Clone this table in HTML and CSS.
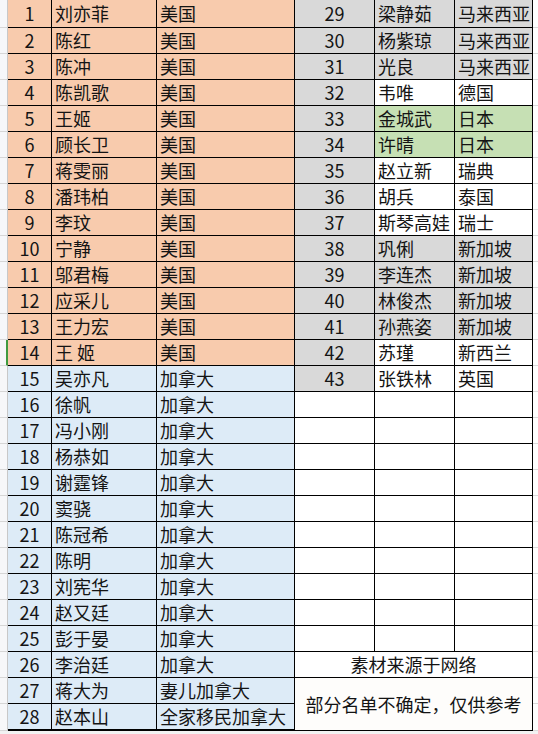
FILE: index.html
```html
<!DOCTYPE html>
<html lang="zh">
<head>
<meta charset="utf-8">
<link rel="stylesheet" href="styles.css">
</head>
<body>
<div class="sheet">
<div class="s"></div><div class="c n o">1</div><div class="c t o">刘亦菲</div><div class="c t o">美国</div><div class="c n g">29</div><div class="c t g">梁静茹</div><div class="c t g">马来西亚</div><div class="e"></div>
<div class="s"></div><div class="c n o">2</div><div class="c t o">陈红</div><div class="c t o">美国</div><div class="c n g">30</div><div class="c t g">杨紫琼</div><div class="c t g">马来西亚</div><div class="e"></div>
<div class="s"></div><div class="c n o">3</div><div class="c t o">陈冲</div><div class="c t o">美国</div><div class="c n g">31</div><div class="c t g">光良</div><div class="c t g">马来西亚</div><div class="e"></div>
<div class="s"></div><div class="c n o">4</div><div class="c t o">陈凯歌</div><div class="c t o">美国</div><div class="c n g">32</div><div class="c t w">韦唯</div><div class="c t w">德国</div><div class="e"></div>
<div class="s"></div><div class="c n o">5</div><div class="c t o">王姬</div><div class="c t o">美国</div><div class="c n g">33</div><div class="c t gr">金城武</div><div class="c t gr">日本</div><div class="e"></div>
<div class="s"></div><div class="c n o">6</div><div class="c t o">顾长卫</div><div class="c t o">美国</div><div class="c n g">34</div><div class="c t gr">许晴</div><div class="c t gr">日本</div><div class="e"></div>
<div class="s"></div><div class="c n o">7</div><div class="c t o">蒋雯丽</div><div class="c t o">美国</div><div class="c n g">35</div><div class="c t w">赵立新</div><div class="c t w">瑞典</div><div class="e"></div>
<div class="s"></div><div class="c n o">8</div><div class="c t o">潘玮柏</div><div class="c t o">美国</div><div class="c n g">36</div><div class="c t w">胡兵</div><div class="c t w">泰国</div><div class="e"></div>
<div class="s"></div><div class="c n o">9</div><div class="c t o">李玟</div><div class="c t o">美国</div><div class="c n g">37</div><div class="c t w">斯琴高娃</div><div class="c t w">瑞士</div><div class="e"></div>
<div class="s"></div><div class="c n o">10</div><div class="c t o">宁静</div><div class="c t o">美国</div><div class="c n g">38</div><div class="c t g">巩俐</div><div class="c t g">新加坡</div><div class="e"></div>
<div class="s"></div><div class="c n o">11</div><div class="c t o">邬君梅</div><div class="c t o">美国</div><div class="c n g">39</div><div class="c t g">李连杰</div><div class="c t g">新加坡</div><div class="e"></div>
<div class="s"></div><div class="c n o">12</div><div class="c t o">应采儿</div><div class="c t o">美国</div><div class="c n g">40</div><div class="c t g">林俊杰</div><div class="c t g">新加坡</div><div class="e"></div>
<div class="s"></div><div class="c n o">13</div><div class="c t o">王力宏</div><div class="c t o">美国</div><div class="c n g">41</div><div class="c t g">孙燕姿</div><div class="c t g">新加坡</div><div class="e"></div>
<div class="s sel"></div><div class="c n o">14</div><div class="c t o">王 姬</div><div class="c t o">美国</div><div class="c n g">42</div><div class="c t w">苏瑾</div><div class="c t w">新西兰</div><div class="e"></div>
<div class="s"></div><div class="c n b">15</div><div class="c t b">吴亦凡</div><div class="c t b">加拿大</div><div class="c n g">43</div><div class="c t w">张铁林</div><div class="c t w">英国</div><div class="e"></div>
<div class="s"></div><div class="c n b">16</div><div class="c t b">徐帆</div><div class="c t b">加拿大</div><div class="c w"></div><div class="c w"></div><div class="c w"></div><div class="e"></div>
<div class="s"></div><div class="c n b">17</div><div class="c t b">冯小刚</div><div class="c t b">加拿大</div><div class="c w"></div><div class="c w"></div><div class="c w"></div><div class="e"></div>
<div class="s"></div><div class="c n b">18</div><div class="c t b">杨恭如</div><div class="c t b">加拿大</div><div class="c w"></div><div class="c w"></div><div class="c w"></div><div class="e"></div>
<div class="s"></div><div class="c n b">19</div><div class="c t b">谢霆锋</div><div class="c t b">加拿大</div><div class="c w"></div><div class="c w"></div><div class="c w"></div><div class="e"></div>
<div class="s"></div><div class="c n b">20</div><div class="c t b">窦骁</div><div class="c t b">加拿大</div><div class="c w"></div><div class="c w"></div><div class="c w"></div><div class="e"></div>
<div class="s"></div><div class="c n b">21</div><div class="c t b">陈冠希</div><div class="c t b">加拿大</div><div class="c w"></div><div class="c w"></div><div class="c w"></div><div class="e"></div>
<div class="s"></div><div class="c n b">22</div><div class="c t b">陈明</div><div class="c t b">加拿大</div><div class="c w"></div><div class="c w"></div><div class="c w"></div><div class="e"></div>
<div class="s"></div><div class="c n b">23</div><div class="c t b">刘宪华</div><div class="c t b">加拿大</div><div class="c w"></div><div class="c w"></div><div class="c w"></div><div class="e"></div>
<div class="s"></div><div class="c n b">24</div><div class="c t b">赵又廷</div><div class="c t b">加拿大</div><div class="c w"></div><div class="c w"></div><div class="c w"></div><div class="e"></div>
<div class="s"></div><div class="c n b">25</div><div class="c t b">彭于晏</div><div class="c t b">加拿大</div><div class="c w"></div><div class="c w"></div><div class="c w"></div><div class="e"></div>
<div class="s"></div><div class="c n b">26</div><div class="c t b">李治廷</div><div class="c t b">加拿大</div><div class="c w m1">素材来源于网络</div><div class="e"></div>
<div class="s"></div><div class="c n b">27</div><div class="c t b">蒋大为</div><div class="c t b">妻儿加拿大</div><div class="c w m2">部分名单不确定，仅供参考</div><div class="e"></div>
<div class="s"></div><div class="c n b last">28</div><div class="c t b last">赵本山</div><div class="c t b last">全家移民加拿大</div><div class="e"></div>
<div class="foot"></div>
</div>
</body>
</html>
```
FILE: styles.css
```css
html, body {
  margin: 0;
  padding: 0;
  background: #ffffff;
}
.sheet {
  display: grid;
  grid-template-columns: 8px 44px 105px 138px 80px 80px 78px 5px;
  grid-template-rows: 28px repeat(26, 26px) 27px 3px;
  width: 538px;
  height: 734px;
  overflow: hidden;
  font-family: "Noto Sans CJK SC", "Noto Sans", sans-serif;
  font-size: 18px;
  color: #141414;
}
.c {
  box-sizing: border-box;
  border-right: 1px solid #000;
  border-bottom: 1px solid #000;
  display: flex;
  align-items: center;
  line-height: 1;
  white-space: nowrap;
  overflow: hidden;
  padding-bottom: 1px;
}
.n {
  justify-content: center;
}
.t {
  padding-left: 3px;
}
.s {
  box-sizing: border-box;
  background: #f6f7f9;
  border-bottom: 1px solid #d6d6d6;
  border-right: 1px solid #c8c8c8;
}
.s.sel {
  border-right: 2px solid #3f9a3f;
}
.e {
  box-sizing: border-box;
  background: #ffffff;
  border-bottom: 1px solid #dadada;
}
.o { background: #f8cbad; }
.b { background: #ddebf7; }
.g { background: #d9d9d9; }
.gr { background: #c6e0b4; }
.w { background: #ffffff; }
.m1 {
  grid-column: span 3;
  justify-content: center;
}
.m2 {
  grid-column: span 3;
  grid-row: span 2;
  justify-content: center;
  background: #fefdfb;
}
.last {
  border-bottom: 2px solid #000;
}
.foot {
  grid-column: 1 / -1;
  background: #f2f2f2;
}
```
